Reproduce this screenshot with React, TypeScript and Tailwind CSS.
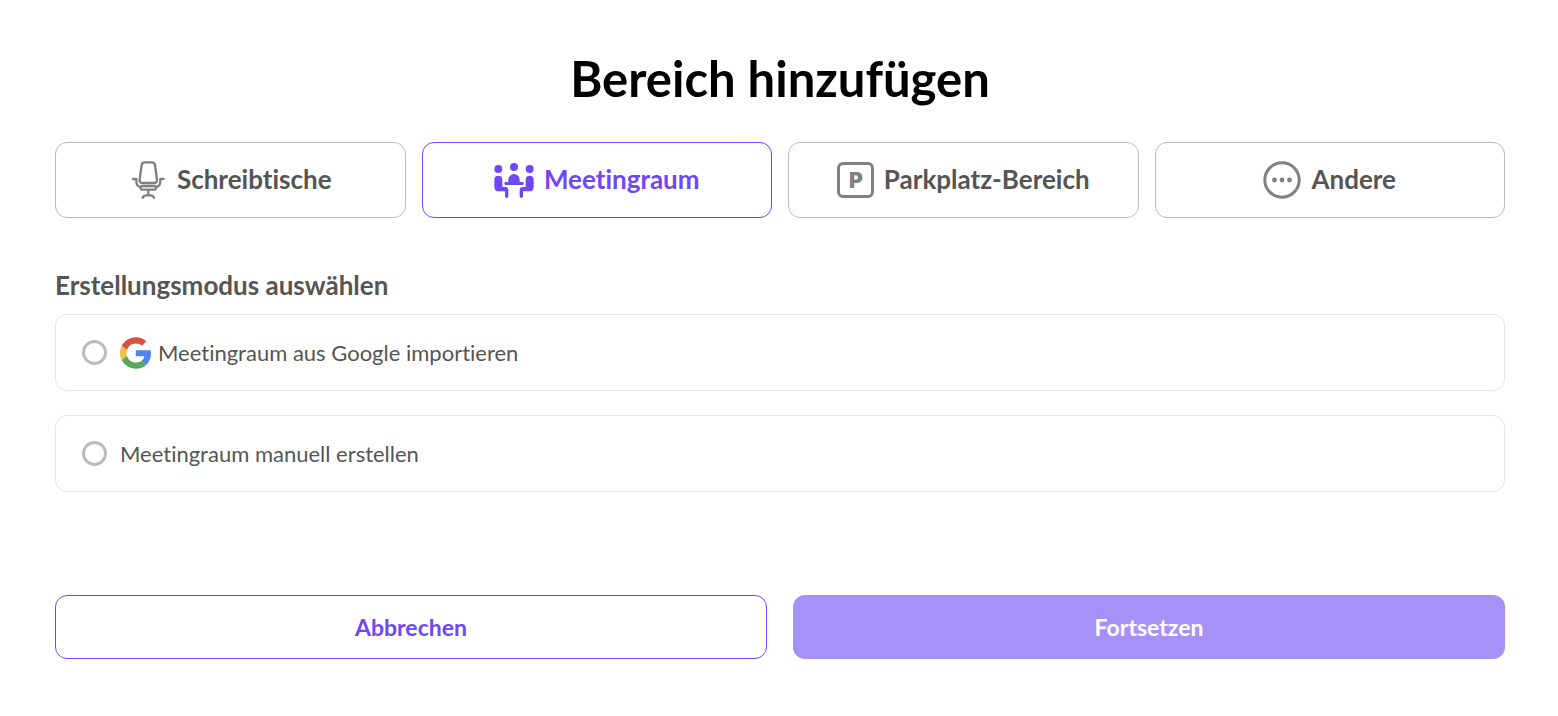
import { useState } from 'react';
import type { ReactNode } from 'react';

function ChairIcon() {
  return (
    <svg
      viewBox="24 33 114 114"
      className="h-[38px] w-[38px]"
      fill="none"
      stroke="#808080"
      strokeWidth="7"
      strokeLinecap="round"
      strokeLinejoin="round"
      aria-hidden="true"
    >
      <path d="M71 37h22q8 0 9 8l6 44q1 10-9 10H65q-10 0-9-10l6-44q1-8 9-8z" />
      <rect x="59" y="108" width="46" height="11" rx="5.500" />
      <path d="M36 87h10v7q0 15 13 18M128 87h-10v7q0 15-13 18" />
      <path d="M82 121v14M65 143q3-7 10-7h14q7 0 10 7" />
    </svg>
  );
}

function MeetingIcon() {
  return (
    <svg viewBox="29 36 120 108" className="h-9 w-10" fill="currentColor" aria-hidden="true">
      <circle cx="42" cy="57" r="12" />
      <circle cx="89" cy="51" r="12" />
      <circle cx="136" cy="57" r="12" />
      <path d="M72 98V89a17 17 0 0 1 34 0v9z" />
      <rect x="60" y="96" width="58" height="9" rx="4.500" />
      <path d="M42 77q12 0 12 12v22h8q10 0 10 10v18q0 5-5 5t-5-5v-15H44q-14 0-14-14V89q0-12 12-12z" />
      <path d="M136 77q-12 0-12 12v22h-8q-10 0-10 10v18q0 5 5 5t5-5v-15h18q14 0 14-14V89q0-12-12-12z" />
    </svg>
  );
}

function ParkingIcon() {
  return (
    <svg viewBox="0 0 37 36" className="h-9 w-[37px]" aria-hidden="true">
      <rect x="1.500" y="1.500" width="34" height="33" rx="4.500" fill="none" stroke="#808080" strokeWidth="3" />
      <text
        x="19"
        y="26"
        textAnchor="middle"
        fontFamily="Inter, sans-serif"
        fontWeight="900"
        fontSize="21"
        fill="#808080"
      >
        P
      </text>
    </svg>
  );
}

function MoreIcon() {
  return (
    <svg viewBox="0 0 38 38" className="h-[38px] w-[38px]" fill="#808080" aria-hidden="true">
      <circle cx="19" cy="19" r="17.200" fill="none" stroke="#808080" strokeWidth="3" />
      <circle cx="11.500" cy="19" r="2.400" />
      <circle cx="19" cy="19" r="2.400" />
      <circle cx="26.500" cy="19" r="2.400" />
    </svg>
  );
}

function GoogleIcon() {
  return (
    <svg viewBox="0 0 47 48" className="h-8 w-[31px]" aria-hidden="true">
      <path fill="#D85140" d="M24 9.500c3.540 0 6.710 1.220 9.210 3.600l6.850-6.850C35.900 2.380 30.470 0 24 0 14.620 0 6.510 5.380 2.560 13.220l7.980 6.190C12.430 13.720 17.740 9.500 24 9.500z" />
      <path fill="#5383EC" d="M46.980 24.550c0-1.570-.15-3.090-.38-4.550H24v9.020h12.940c-.58 2.960-2.260 5.480-4.780 7.180l7.730 6c4.510-4.180 7.090-10.360 7.090-17.650z" />
      <path fill="#F1BF42" d="M10.530 28.590c-.48-1.450-.76-2.990-.76-4.590s.27-3.140.76-4.590l-7.980-6.190C.92 16.460 0 20.120 0 24c0 3.880.92 7.540 2.560 10.780l7.970-6.190z" />
      <path fill="#58A55C" d="M24 48c6.480 0 11.930-2.130 15.890-5.810l-7.730-6c-2.150 1.450-4.920 2.300-8.160 2.300-6.260 0-11.570-4.220-13.470-9.910l-7.980 6.190C6.510 42.620 14.620 48 24 48z" />
    </svg>
  );
}

const areas = [
  { id: 'desks', label: 'Schreibtische', icon: <ChairIcon /> },
  { id: 'meeting', label: 'Meetingraum', icon: <MeetingIcon /> },
  { id: 'parking', label: 'Parkplatz-Bereich', icon: <ParkingIcon /> },
  { id: 'other', label: 'Andere', icon: <MoreIcon /> },
];

const modes: { id: string; label: string; icon?: ReactNode }[] = [
  { id: 'google', label: 'Meetingraum aus Google importieren', icon: <GoogleIcon /> },
  { id: 'manual', label: 'Meetingraum manuell erstellen' },
];

export default function App() {
  const [area, setArea] = useState('meeting');
  const [mode, setMode] = useState('');

  return (
    <main className="bg-white pt-12 pr-[53px] pb-14 pl-[55px] font-['Lato',sans-serif] text-[#555555] [font-variant-ligatures:none]">
      <h1 className="text-center text-[49px] leading-[60px] font-bold text-black">Bereich hinzufügen</h1>

      <div className="mt-[34px] grid grid-cols-4 gap-4">
        {areas.map((item) => (
          <button
            key={item.id}
            type="button"
            aria-pressed={area === item.id}
            onClick={() => setArea(item.id)}
            className={`flex h-[76px] items-center justify-center gap-2.5 rounded-xl border text-[26px] leading-8 font-bold ${
              area === item.id ? 'border-[#6F47F5] text-[#6F47F5]' : 'border-[#BBBBBB]'
            }`}
          >
            {item.icon}
            <span className="pb-0.5">{item.label}</span>
          </button>
        ))}
      </div>

      <fieldset className="mt-[51px]">
        <legend className="text-[26px] leading-8 font-bold">Erstellungsmodus auswählen</legend>
        <div className="mt-[13px] space-y-6">
          {modes.map((item) => (
            <label
              key={item.id}
              className="flex h-[77px] cursor-pointer items-center rounded-xl border border-[#E6E6E6] pl-[26px] text-[22px] leading-7"
            >
              <input
                type="radio"
                name="mode"
                value={item.id}
                checked={mode === item.id}
                onChange={() => setMode(item.id)}
                className="mr-[13px] h-[25px] w-[25px] appearance-none rounded-full border-[3px] border-[#BBBBBB] checked:border-8 checked:border-[#6F47F5]"
              />
              {item.icon}
              <span className={item.icon ? 'ml-[7px]' : ''}>{item.label}</span>
            </label>
          ))}
        </div>
      </fieldset>

      <div className="mt-[103px] grid grid-cols-2 gap-[26px] text-[23px] leading-7 font-bold">
        <button type="button" className="h-16 rounded-xl border border-[#6F47F5] text-[#6F47F5]">
          Abbrechen
        </button>
        <button type="button" className="h-16 rounded-xl bg-[#A890F9] text-white">
          Fortsetzen
        </button>
      </div>
    </main>
  );
}
